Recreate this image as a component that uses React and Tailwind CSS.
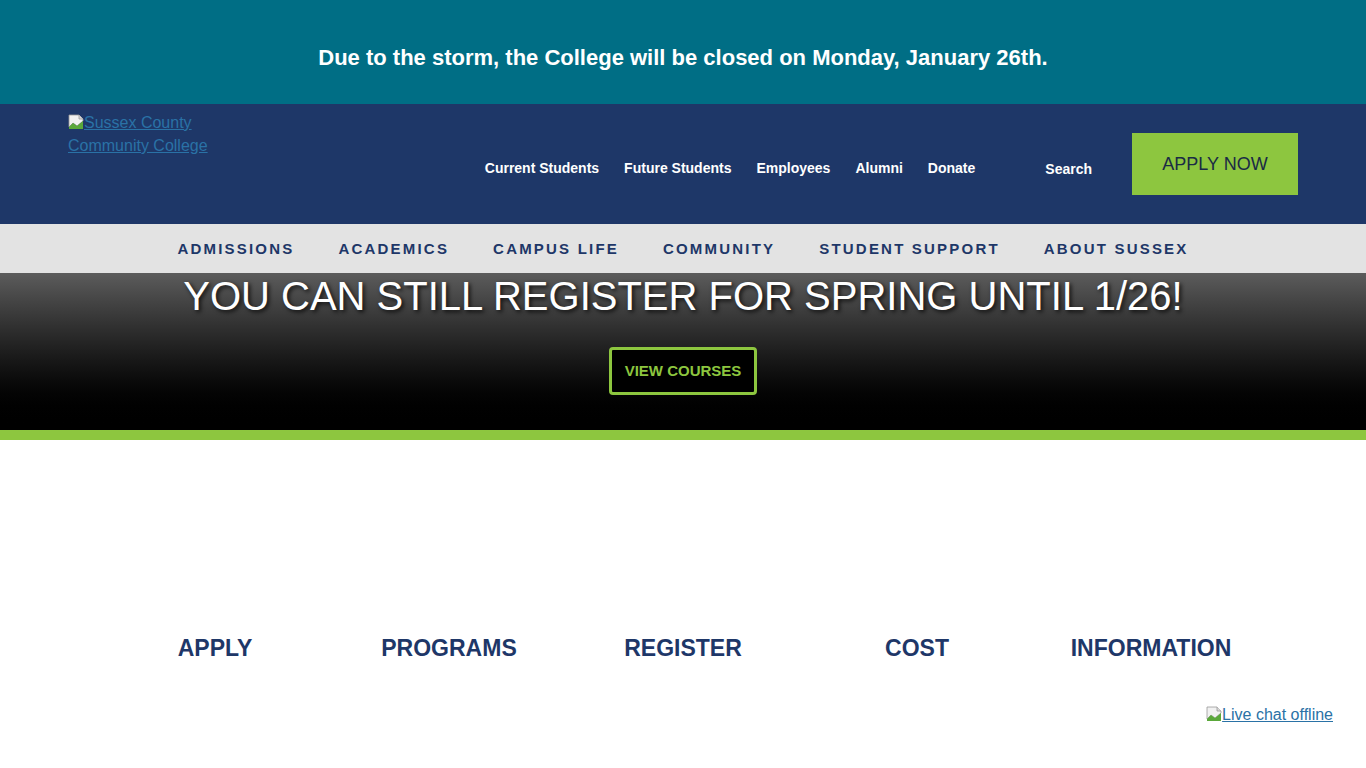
import React from 'react';

// Broken-image placeholder glyph
const BrokenImg = () => (
  <svg width="16" height="16" viewBox="0 0 16 16" className="inline-block align-[-2px]">
    <path d="M1 1h10l4 4v2L9 12 5 9l-4 4z" fill="#f1f1f1" stroke="#9a9a9a" strokeWidth="0.8" />
    <path d="M1 13l4-4 4 3 6-5v8H1z" fill="#5aa83a" />
    <path d="M11 1v4h4" fill="#d8d8d8" stroke="#9a9a9a" strokeWidth="0.8" />
  </svg>
);

const utility = ['Current Students', 'Future Students', 'Employees', 'Alumni', 'Donate'];
const mainNav = ['ADMISSIONS', 'ACADEMICS', 'CAMPUS LIFE', 'COMMUNITY', 'STUDENT SUPPORT', 'ABOUT SUSSEX'];
const quick = ['APPLY', 'PROGRAMS', 'REGISTER', 'COST', 'INFORMATION'];

export default function App() {
  return (
    <div className="min-h-screen bg-white font-['Liberation_Sans',Arial,sans-serif]">
      {/* Alert banner */}
      <div className="h-[104px] bg-[#006e85] flex items-center justify-center">
        <p className="text-white font-bold text-[22px] pt-[10px]">
          Due to the storm, the College will be closed on Monday, January 26th.
        </p>
      </div>

      {/* Header */}
      <header className="h-[120px] bg-[#1e3768] flex px-[68px]">
        <a href="#" className="mt-[7px] w-[145px] text-[16px] leading-[23px] text-[#2a72a6] underline">
          <BrokenImg />Sussex County Community College
        </a>
        <nav className="flex items-center gap-[25px] ml-auto mr-[40px] mt-[8px]">
          {utility.map((u) => (
            <a key={u} href="#" className="text-white font-bold text-[14px]">{u}</a>
          ))}
          <a href="#" className="ml-[45px] text-white font-bold text-[14px] mt-[2px]">Search</a>
        </nav>
        <a href="#" className="mt-[29px] h-[62px] w-[166px] bg-[#8dc63f] flex items-center justify-center text-[18px] text-[#1a2b45]">
          APPLY NOW
        </a>
      </header>

      {/* Main nav */}
      <nav className="h-[49px] bg-[#e3e3e3] flex items-center justify-center gap-[44px]">
        {mainNav.map((m) => (
          <a key={m} href="#" className="text-[#1e3768] font-bold text-[15px] tracking-[2.2px] pt-[1px]">{m}</a>
        ))}
      </nav>

      {/* Hero */}
      <section className="h-[157px] bg-gradient-to-b from-[#5c5c5c] via-[#1e1e1e] to-black flex flex-col items-center">
        <h1 className="text-white text-[40px] leading-[46px] [text-shadow:2px_2px_4px_rgba(0,0,0,0.8)]">
          YOU CAN STILL REGISTER FOR SPRING UNTIL 1/26!
        </h1>
        <a href="#" className="mt-[28px] w-[148px] h-[48px] border-[3px] border-[#8dc63f] rounded-[4px] bg-black flex items-center justify-center text-[#8dc63f] font-bold text-[15px]">
          VIEW COURSES
        </a>
      </section>
      <div className="h-[10px] bg-[#8dc63f]" />

      {/* Quick links */}
      <div className="w-[1170px] mx-auto grid grid-cols-5 pt-[191px]">
        {quick.map((q) => (
          <a key={q} href="#" className="text-center text-[#1e3768] font-bold text-[23px]">{q}</a>
        ))}
      </div>

      <div className="flex justify-end pr-[33px] mt-[37px]">
        <a href="#" className="text-[16px] text-[#2a72a6] underline">
          <BrokenImg />Live chat offline
        </a>
      </div>
    </div>
  );
}
